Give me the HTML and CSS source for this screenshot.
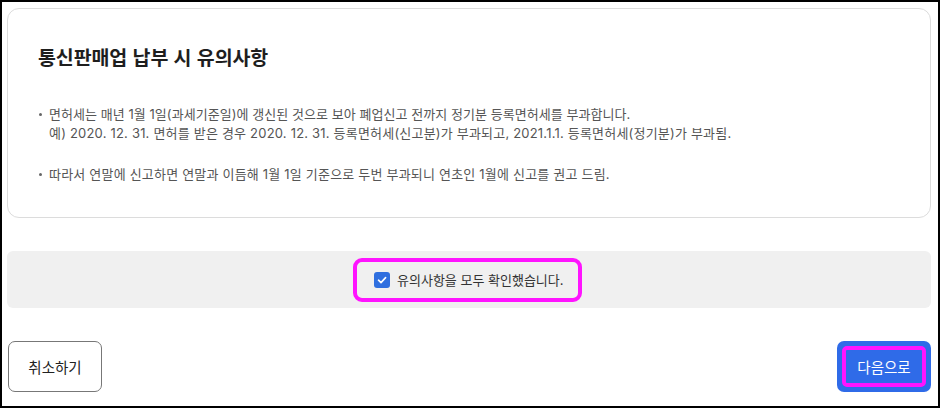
FILE: index.html
```html
<!DOCTYPE html>
<html lang="ko">
<head>
<meta charset="utf-8">
<link rel="stylesheet" href="styles.css">
</head>
<body>
<div class="frame">
  <section class="card">
    <h1 class="title">통신판매업 납부 시 유의사항</h1>
    <ul class="notes">
      <li>면허세는 매년 1월 1일(과세기준일)에 갱신된 것으로 보아 폐업신고 전까지 정기분 등록면허세를 부과합니다.<br><span class="example">예) 2020. 12. 31. 면허를 받은 경우 2020. 12. 31. 등록면허세(신고분)가 부과되고, 2021.1.1. 등록면허세(정기분)가 부과됨.</span></li>
      <li class="wide">따라서 연말에 신고하면 연말과 이듬해 1월 1일 기준으로 두번 부과되니 연초인 1월에 신고를 권고 드림.</li>
    </ul>
  </section>
  <div class="confirm-bar">
    <label class="confirm">
      <span class="checkbox"><svg width="12" height="12" viewBox="0 0 12 12"><path d="M2.5 6.2 L5 8.6 L9.6 3.6" fill="none" stroke="#fff" stroke-width="1.6" stroke-linecap="round" stroke-linejoin="round"/></svg></span>
      <span class="confirm-text">유의사항을 모두 확인했습니다.</span>
    </label>
  </div>
  <div class="actions">
    <button class="btn btn-cancel">취소하기</button>
    <button class="btn btn-next"><span class="next-inner">다음으로</span></button>
  </div>
</div>
</body>
</html>
```
FILE: styles.css
```css
html, body {
  margin: 0;
  padding: 0;
  background: #fff;
}
body {
  font-family: "Inter", "Noto Sans CJK KR", sans-serif;
}
.frame {
  width: 940px;
  height: 408px;
  box-sizing: border-box;
  border: 2px solid #000;
  padding: 6px 7px 0 5px;
  display: flex;
  flex-direction: column;
}
.card {
  height: 210px;
  box-sizing: border-box;
  border: 1px solid #dcdcdc;
  border-radius: 12px;
  padding: 33px 30px 0 30px;
}
.title {
  margin: 0;
  font-family: "Noto Sans CJK KR", sans-serif;
  font-size: 19.5px;
  font-weight: 700;
  color: #1e1e1e;
  line-height: 30px;
  letter-spacing: -0.1px;
}
.notes {
  list-style: none;
  margin: 33px 0 0 0;
  padding: 0;
}
.notes li {
  position: relative;
  padding-left: 11px;
  font-size: 13px;
  line-height: 19px;
  color: #555;
  letter-spacing: 0.05px;
}
.notes .example {
  letter-spacing: 0.2px;
}
.notes li.wide {
  letter-spacing: 0.2px;
}
.notes li + li {
  margin-top: 22px;
}
.notes li::before {
  content: "";
  position: absolute;
  left: 1px;
  top: 8px;
  width: 3px;
  height: 3px;
  border-radius: 50%;
  background: #666;
}
.confirm-bar {
  margin-top: 33px;
  height: 57px;
  background: #f0f0f0;
  border-radius: 6px;
  display: flex;
  align-items: center;
  justify-content: center;
}
.confirm {
  width: 229px;
  height: 44px;
  box-sizing: border-box;
  border: 4px solid #ff14ff;
  border-radius: 9px;
  display: flex;
  align-items: center;
  padding-left: 17px;
  gap: 7px;
  margin-right: 3px;
}
.checkbox {
  width: 16px;
  height: 16px;
  border-radius: 3px;
  background: #2f6fdf;
  display: flex;
  align-items: center;
  justify-content: center;
}
.confirm-text {
  font-size: 13px;
  color: #333;
}
.actions {
  margin-top: 33px;
  display: flex;
  justify-content: space-between;
}
.btn {
  width: 94px;
  height: 51px;
  box-sizing: border-box;
  border-radius: 7px;
  font-family: "Noto Sans CJK KR", sans-serif;
  font-size: 14.5px;
  padding: 0;
  display: flex;
  align-items: center;
  justify-content: center;
}
.btn-cancel {
  margin-left: 1px;
  background: #fff;
  border: 1px solid #777;
  color: #222;
}
.btn-next {
  background: #2f6be8;
  border: none;
  color: #fff;
}
.next-inner {
  width: 84px;
  height: 41px;
  box-sizing: border-box;
  border: 4px solid #ff14ff;
  border-radius: 5px;
  display: flex;
  align-items: center;
  justify-content: center;
}
```
